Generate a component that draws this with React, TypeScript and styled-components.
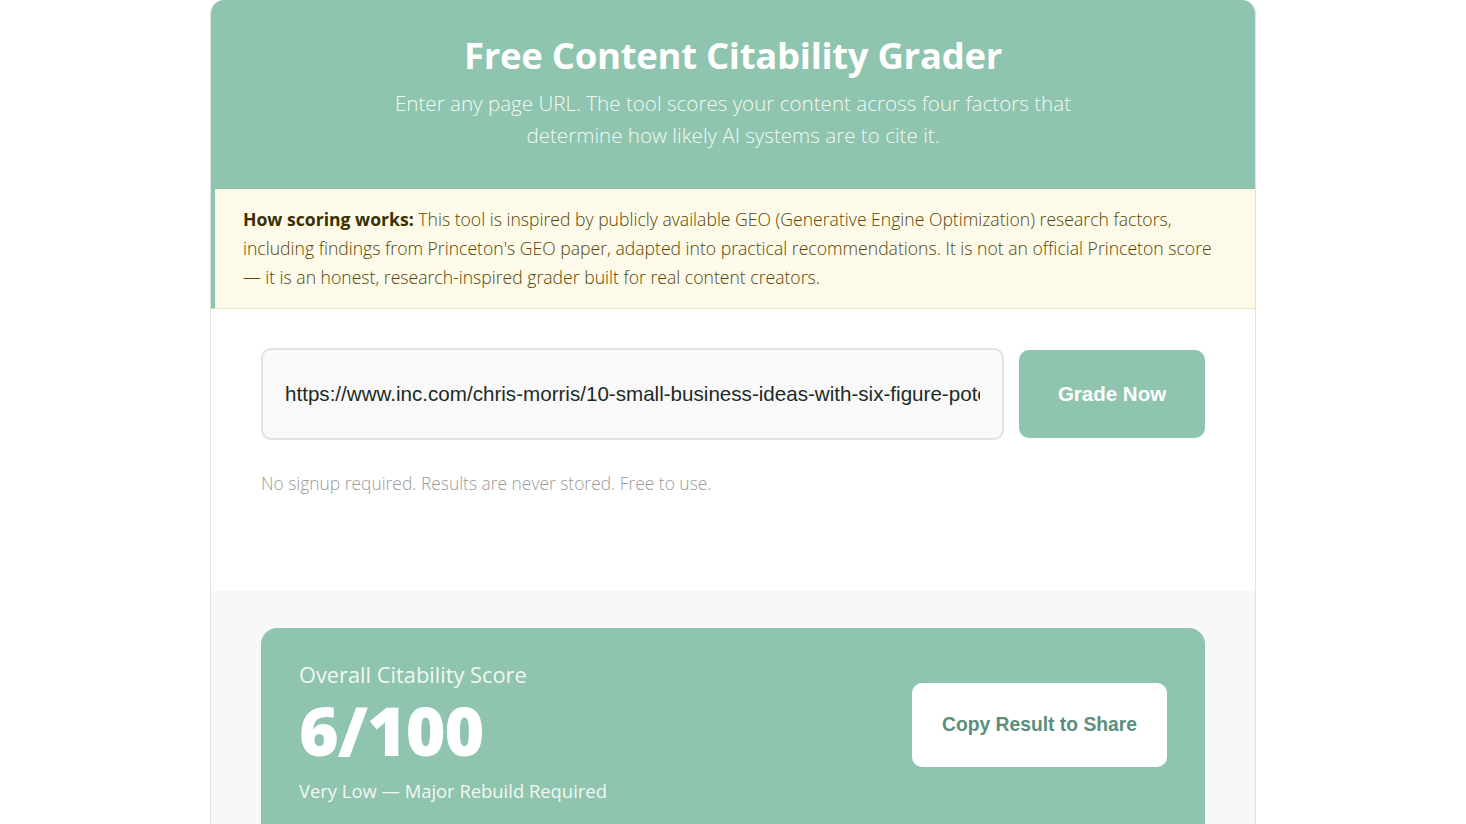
import styled, { createGlobalStyle } from 'styled-components'

const GlobalStyle = createGlobalStyle`
  html, body {
    margin: 0;
    padding: 0;
    background: #ffffff;
  }
  body {
    font-family: 'Open Sans', 'Noto Sans', sans-serif;
  }
  * {
    box-sizing: border-box;
  }
`

const Card = styled.div`
  width: 1046px;
  margin: 0 auto;
  border: 1px solid #e2e2e2;
  border-top: none;
  border-radius: 14px 14px 0 0;
  overflow: hidden;
  background: #ffffff;
`

const Header = styled.header`
  background: #8fc5ae;
  padding: 31px 40px 38px;
  text-align: center;
  color: #ffffff;
`

const Title = styled.h1`
  margin: 0 0 8px;
  font-size: 36.5px;
  font-weight: 700;
  line-height: 48px;
  letter-spacing: -0.3px;
`

const Subtitle = styled.p`
  margin: 0 auto;
  max-width: 720px;
  font-size: 20.6px;
  font-weight: 300;
  line-height: 32px;
  color: rgba(255, 255, 255, 0.92);
`

const Notice = styled.div`
  background: #fdfaea;
  border-left: 4px solid #8fc5ae;
  border-bottom: 1px solid #ece3bd;
  padding: 16px 28px 16px;
  font-size: 17.6px;
  font-weight: 300;
  line-height: 29px;
  color: #574600;
`

const NoticeLead = styled.strong`
  font-weight: 700;
  color: #3b3000;
`

const FormSection = styled.section`
  padding: 39px 50px 96px;
  background: #ffffff;
`

const FormRow = styled.div`
  display: flex;
  align-items: center;
  gap: 15px;
`

const UrlInput = styled.input`
  flex: 1;
  min-width: 0;
  height: 92px;
  padding: 0 22px;
  border: 2px solid #e2e2e2;
  border-radius: 10px;
  background: #f9f9f9;
  font-family: 'Liberation Sans', Arial, sans-serif;
  font-size: 20.6px;
  color: #1d2b27;
  outline: none;
`

const GradeButton = styled.button`
  width: 186px;
  height: 88px;
  border: none;
  border-radius: 10px;
  background: #8fc5ae;
  color: #ffffff;
  font-family: 'Liberation Sans', Arial, sans-serif;
  font-size: 20.5px;
  font-weight: 700;
  cursor: pointer;
`

const Hint = styled.p`
  margin: 31px 0 0;
  font-size: 17.4px;
  font-weight: 300;
  line-height: 24px;
  color: #9a9a9a;
`

const ResultSection = styled.section`
  background: #f8f8f8;
  padding: 37px 50px 40px;
`

const ScoreCard = styled.div`
  display: flex;
  align-items: flex-start;
  justify-content: space-between;
  background: #8fc5ae;
  border-radius: 16px;
  padding: 32px 38px 40px;
  color: #ffffff;
`

const ScoreInfo = styled.div`
  display: flex;
  flex-direction: column;
`

const ScoreLabel = styled.div`
  font-size: 21.8px;
  line-height: 30px;
  color: rgba(255, 255, 255, 0.9);
`

const ScoreValue = styled.div`
  font-size: 68px;
  font-weight: 800;
  line-height: 80px;
  letter-spacing: -1px;
`

const ScoreVerdict = styled.div`
  margin-top: 8px;
  font-size: 18.4px;
  line-height: 26px;
  color: rgba(255, 255, 255, 0.9);
`

const CopyButton = styled.button`
  width: 255px;
  height: 84px;
  margin-top: 23px;
  border: none;
  border-radius: 10px;
  background: #ffffff;
  color: #5b8f7c;
  font-family: 'Liberation Sans', Arial, sans-serif;
  font-size: 19.3px;
  font-weight: 700;
  cursor: pointer;
`

export default function App () {
  return (
    <>
      <GlobalStyle />
      <Card>
        <Header>
          <Title>Free Content Citability Grader</Title>
          <Subtitle>
            Enter any page URL. The tool scores your content across four factors that
            determine how likely AI systems are to cite it.
          </Subtitle>
        </Header>
        <Notice>
          <NoticeLead>How scoring works:</NoticeLead> This tool is inspired by publicly available
          GEO (Generative Engine Optimization) research factors, including findings from
          Princeton's GEO paper, adapted into practical recommendations. It is not an official
          Princeton score — it is an honest, research-inspired grader built for real content
          creators.
        </Notice>
        <FormSection>
          <FormRow>
            <UrlInput
              type='text'
              defaultValue='https://www.inc.com/chris-morris/10-small-business-ideas-with-six-figure-potential.html'
            />
            <GradeButton>Grade Now</GradeButton>
          </FormRow>
          <Hint>No signup required. Results are never stored. Free to use.</Hint>
        </FormSection>
        <ResultSection>
          <ScoreCard>
            <ScoreInfo>
              <ScoreLabel>Overall Citability Score</ScoreLabel>
              <ScoreValue>6/100</ScoreValue>
              <ScoreVerdict>Very Low — Major Rebuild Required</ScoreVerdict>
            </ScoreInfo>
            <CopyButton>Copy Result to Share</CopyButton>
          </ScoreCard>
        </ResultSection>
      </Card>
    </>
  )
}
